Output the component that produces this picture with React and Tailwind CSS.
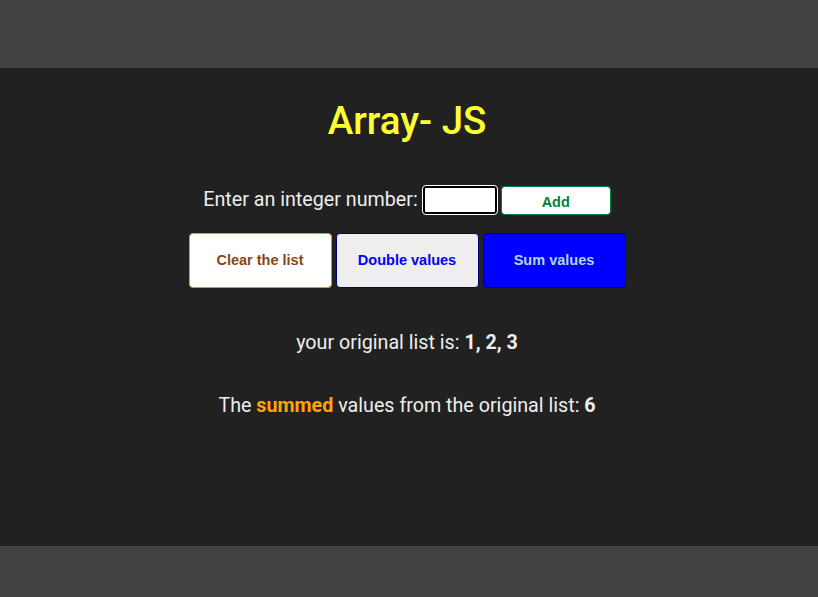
export default function App() {
  return (
    <div className="min-h-[597px] flex flex-col bg-[#424242]" style={{ fontFamily: 'Roboto, sans-serif' }}>
      <div className="h-[68px]" />
      <main className="h-[478px] bg-[#212121] flex flex-col items-center pr-[4px] text-[#eeeeee]">
        <h1 className="mt-[29px] text-[38.5px] leading-[48px] font-medium text-[#ffff33]">Array- JS</h1>
        <div className="mt-[40px] flex items-center text-[19.7px] leading-[30px]">
          <span>Enter an integer number:</span>
          <input
            type="text"
            className="ml-[5px] w-[74px] h-[28px] bg-white border-2 border-black rounded-[3px] outline outline-1 outline-white text-black"
          />
          <button className="ml-[4px] w-[110px] h-[29px] bg-white border border-green-700 rounded-[4px] text-green-700 font-bold text-[14.5px]" style={{ fontFamily: '"Liberation Sans", sans-serif' }}>
            Add
          </button>
        </div>
        <div className="mt-[18px] flex gap-[4px]" style={{ fontFamily: '"Liberation Sans", sans-serif' }}>
          <button className="w-[143px] h-[55px] bg-white border border-orange-400 rounded-[4px] text-[#8b4513] font-bold text-[14.5px]">
            Clear the list
          </button>
          <button className="w-[143px] h-[55px] bg-[#eeeeee] border border-[#000080] rounded-[4px] text-[#0000ff] font-bold text-[14.5px]">
            Double values
          </button>
          <button className="w-[143px] h-[55px] bg-[#0000ff] border border-[#000080] rounded-[4px] text-[#add8e6] font-bold text-[14.5px]">
            Sum values
          </button>
        </div>
        <p className="mt-[41px] text-[19.7px] leading-[28px]">
          your original list is: <b>1, 2, 3</b>
        </p>
        <p className="mt-[35px] text-[19.7px] leading-[28px]">
          The <b className="text-[#ffa500]">summed</b> values from the original list: <b>6</b>
        </p>
      </main>
      <div className="flex-1 bg-[#424242]" />
    </div>
  )
}
